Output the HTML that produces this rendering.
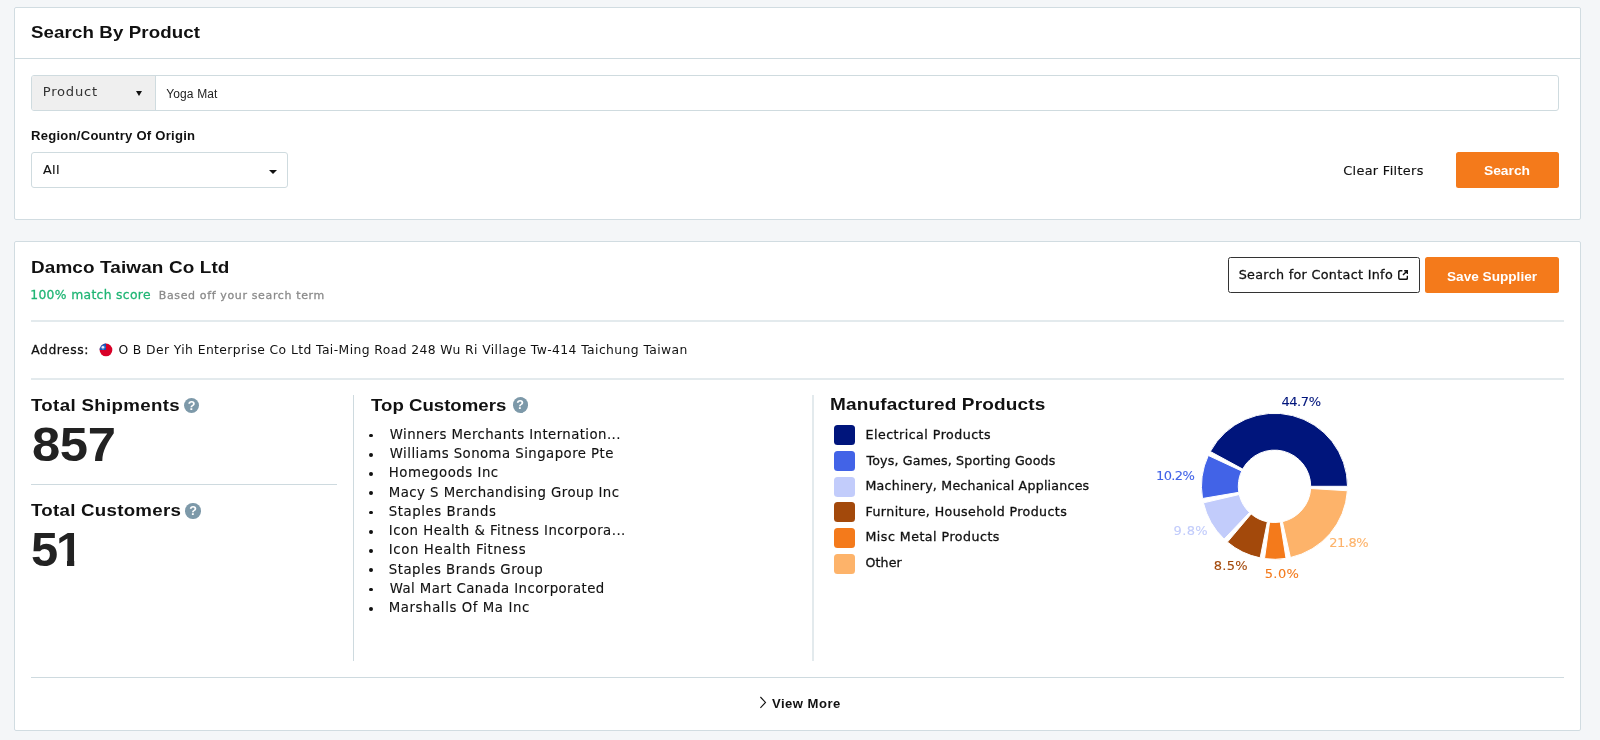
<!DOCTYPE html>
<html lang="en">
<head>
<meta charset="utf-8">
<title>Search By Product</title>
<style>
*{box-sizing:border-box;margin:0;padding:0}
html,body{width:1600px;height:740px;overflow:hidden}
body{background:#f4f6f8;color:#111;font-family:"DejaVu Sans","Liberation Sans",sans-serif;font-size:13px;position:relative}
.b{font-family:"Liberation Sans","DejaVu Sans",sans-serif;font-weight:bold}
.t{position:absolute;white-space:nowrap;line-height:1;display:block}
.card{will-change:transform;position:absolute;left:14px;width:1567px;background:#fff;border:1px solid #d1dce1;border-radius:2px}
#search{top:7px;height:213px}
#result{top:241px;height:490px}
.hr{position:absolute;height:1px;background:#cedadf}
.hr.soft{height:2px;background:#e3eaed}
.vr{position:absolute;width:1px;background:#cedadf}
.vr.soft{width:2px;background:#e3eaed}
/* card 1 */
#search .head-line{left:0;top:50px;width:1565px}
.group{position:absolute;left:16px;top:67px;width:1528px;height:35.5px;border:1px solid #cfdbdf;border-radius:3px;background:#fff;overflow:hidden}
.group .sel{position:absolute;left:0;top:0;width:124px;height:34px;background:#efefef;border-right:1px solid #cfdbdf}
.caret{position:absolute;width:0;height:0;border-left:4px solid transparent;border-right:4px solid transparent;border-top:5px solid #111}
.select{position:absolute;left:16px;top:144px;width:257px;height:36px;border:1px solid #cfdbdf;border-radius:3px;background:#fff}
.btn{position:absolute;height:36px;border-radius:2.5px;border:0;padding:0;font:inherit;color:inherit;text-align:left;overflow:visible}
.btn.primary{background:#f47a1b;color:#fff}
.btn.outline{background:#fff;border:1px solid #333}
.help{position:absolute;width:15.4px;height:15.4px;border-radius:50%;background:#7d99a9;color:#fff;font-family:"Liberation Sans",sans-serif;font-weight:bold;font-size:12.6px;line-height:16px;text-align:center}
ul.cust{list-style:none;position:absolute;left:355px;top:181px;width:440px}
ul.cust li{position:relative;height:19.25px}
ul.cust li::before{content:"";position:absolute;left:-0.6px;top:10.5px;width:3.9px;height:3.9px;border-radius:50%;background:#111}
ul.cust .t{font-size:13.3px;-webkit-text-stroke:.12px currentColor}
ul.legend{list-style:none;position:absolute;left:819px;top:183.2px;width:300px}
ul.legend li{position:relative;height:25.74px}
ul.legend li i{position:absolute;left:0;top:0;width:21px;height:20px;border-radius:3.5px}
ul.legend .t{font-size:12.6px;-webkit-text-stroke:.3px currentColor}
.pl{font-size:13px;-webkit-text-stroke:.1px currentColor}
.m{-webkit-text-stroke:.28px currentColor}
.m2{-webkit-text-stroke:.15px currentColor}
/*FIT-START*/
#t-title{left:16.30px;top:16.10px;letter-spacing:0.097px;transform:scaleX(1.1000);transform-origin:0 0}
#t-product{left:10.80px;top:9.40px;letter-spacing:0.767px}
#t-yoga{left:134.20px;top:12.20px;letter-spacing:0.143px}
#t-region{left:15.60px;top:123.30px;letter-spacing:0.225px;transform:scaleX(1.1000);transform-origin:0 0}
#t-all{left:10.90px;top:11.10px;letter-spacing:0.450px}
#t-clear{left:1328.20px;top:156.90px;letter-spacing:0.358px}
#t-search{left:27.90px;top:13.25px;letter-spacing:-0.036px;transform:scaleX(1.1000);transform-origin:0 0}
#t-name{left:16.00px;top:16.80px;letter-spacing:0.116px;transform:scaleX(1.1000);transform-origin:0 0}
#t-match{left:15.25px;top:46.75px;letter-spacing:0.333px}
#t-based{left:143.80px;top:47.75px;letter-spacing:0.632px}
#t-contact{left:9.70px;top:10.70px;letter-spacing:0.309px}
#t-save{left:21.51px;top:12.71px;letter-spacing:0.000px;transform:scaleX(1.0471);transform-origin:0 0}
#t-addr-l{left:16.25px;top:102.00px;letter-spacing:0.543px}
#t-addr{left:103.40px;top:102.00px;letter-spacing:0.407px}
#t-ship{left:16.40px;top:154.50px;letter-spacing:0.299px;transform:scaleX(1.1000);transform-origin:0 0}
#t-857{left:17.10px;top:177.50px;letter-spacing:-0.385px;transform:scaleX(1.0397);transform-origin:0 0}
#t-cust{left:16.40px;top:260.00px;letter-spacing:0.240px;transform:scaleX(1.1000);transform-origin:0 0}
#t-top{left:356.00px;top:154.50px;letter-spacing:0.015px;transform:scaleX(1.0943);transform-origin:0 0}
#t-manu{left:815.00px;top:154.10px;letter-spacing:0.136px;transform:scaleX(1.1000);transform-origin:0 0}
#t-view{left:757.00px;top:456.50px;letter-spacing:0.432px;transform:scaleX(1.1000);transform-origin:0 0}
#t-c0{left:19.80px;top:4.80px;letter-spacing:0.426px}
#t-c1{left:19.80px;top:4.80px;letter-spacing:0.446px}
#t-c2{left:18.80px;top:4.80px;letter-spacing:0.508px}
#t-c3{left:18.80px;top:4.80px;letter-spacing:0.455px}
#t-c4{left:18.80px;top:4.80px;letter-spacing:0.554px}
#t-c5{left:18.80px;top:4.80px;letter-spacing:0.473px}
#t-c6{left:18.80px;top:4.80px;letter-spacing:0.600px}
#t-c7{left:18.80px;top:4.80px;letter-spacing:0.500px}
#t-c8{left:19.80px;top:4.80px;letter-spacing:0.422px}
#t-c9{left:18.80px;top:4.80px;letter-spacing:0.578px}
#t-l0{left:31.50px;top:3.91px;letter-spacing:0.489px}
#t-l1{left:32.50px;top:3.68px;letter-spacing:0.173px}
#t-l2{left:31.50px;top:3.44px;letter-spacing:0.223px}
#t-l3{left:31.50px;top:3.21px;letter-spacing:0.418px}
#t-l4{left:31.50px;top:2.98px;letter-spacing:0.494px}
#t-l5{left:31.50px;top:2.74px;letter-spacing:0.100px}
#t-p0{left:1266.40px;top:152.70px;letter-spacing:-0.425px}
#t-p1{left:1141.00px;top:227.10px;letter-spacing:-0.625px}
#t-p2{left:1158.60px;top:281.90px;letter-spacing:0.367px}
#t-p3{left:1198.70px;top:316.50px;letter-spacing:0.300px}
#t-p4{left:1249.70px;top:325.00px;letter-spacing:0.400px}
#t-p5{left:1314.20px;top:293.50px;letter-spacing:-0.475px}
/*FIT-END*/
</style>
</head>
<body>

<section class="card" id="search">
  <h2 class="t b" id="t-title" style="font-size:17px">Search By Product</h2>
  <div class="hr head-line"></div>
  <div class="group">
    <div class="sel">
      <span class="t" id="t-product" style="font-size:13.1px;color:#333">Product</span>
      <i class="caret" style="left:103.6px;top:15.2px;border-left-width:3.8px;border-right-width:3.8px;border-top-width:5.5px"></i>
    </div>
    <span class="t" id="t-yoga" style="font-family:'Liberation Sans',sans-serif;font-size:12px;color:#222">Yoga Mat</span>
  </div>
  <label class="t b" id="t-region" style="font-size:11.9px">Region/Country Of Origin</label>
  <div class="select">
    <span class="t m2" id="t-all" style="font-size:12.8px">All</span>
    <i class="caret" style="left:237px;top:17px;border-top-width:4px"></i>
  </div>
  <a class="t m2" id="t-clear" style="font-size:12.8px">Clear Filters</a>
  <button class="btn primary" style="left:1441px;top:144px;width:103px"><span class="t b" id="t-search" style="font-size:12.6px;color:#fff">Search</span></button>
</section>

<section class="card" id="result">
  <h3 class="t b" id="t-name" style="font-size:17.2px">Damco Taiwan Co Ltd</h3>
  <span class="t m" id="t-match" style="font-size:12.35px;color:#1fb574">100% match score</span>
  <span class="t m" id="t-based" style="font-size:11px;color:#8a8a8a">Based off your search term</span>
  <button class="btn outline" style="left:1213px;top:15.3px;width:191.8px;height:35.8px"><span class="t m" id="t-contact" style="font-size:12.76px">Search for Contact Info</span><svg class="ext" style="position:absolute;left:168.9px;top:11.9px" width="10.2" height="10" viewBox="0 0 10 10" fill="none" stroke="#111" stroke-width="1.45"><path d="M4.3 0.7H1.9A1.2 1.2 0 0 0 0.7 1.9V8.1A1.2 1.2 0 0 0 1.9 9.3H8.1A1.2 1.2 0 0 0 9.3 8.1V5.7"/><path d="M6.1 0.7H9.3V3.9M9.3 0.7L4.9 5.1"/></svg></button>
  <button class="btn primary" style="left:1410.1px;top:15.2px;width:133.6px;height:35.8px"><span class="t b" id="t-save" style="font-size:13px;color:#fff">Save Supplier</span></button>
  <div class="hr soft" style="left:16px;top:78px;width:1533px"></div>

  <span class="t m" id="t-addr-l" style="font-size:12.35px">Address:</span>
  <svg class="flag" style="position:absolute;left:83.8px;top:101px" width="14" height="14" viewBox="0 0 14 14"><circle cx="7" cy="6.9" r="6.35" fill="#d80027"/><path d="M7 6.9H0.65A6.35 6.35 0 0 1 7 0.55Z" fill="#0f52ba"/><circle cx="3.9" cy="4.3" r="2.1" fill="none" stroke="#9db9e6" stroke-width=".7" stroke-dasharray=".6 .5"/><circle cx="3.9" cy="4.3" r="1.35" fill="#eef"/></svg>
  <span class="t" id="t-addr"  style="font-size:12.35px">O B Der Yih Enterprise Co Ltd Tai-Ming Road 248 Wu Ri Village Tw-414 Taichung Taiwan</span>
  <div class="hr soft" style="left:16px;top:136px;width:1533px"></div>

  <h4 class="t b" id="t-ship" style="font-size:17px">Total Shipments</h4>
  <span class="help" style="left:169px;top:155.7px">?</span>
  <div class="t b" id="t-857" style="font-size:48.8px;color:#222">857</div>
  <div class="hr" style="left:16px;top:242px;width:306px"></div>
  <h4 class="t b" id="t-cust" style="font-size:17px">Total Customers</h4>
  <span class="help" style="left:170.3px;top:261.3px">?</span>
  <div class="t b" id="n-51" style="left:15.9px;top:282.9px;font-size:48.8px;color:#222;width:60px;height:49px"><span style="position:absolute;left:0;top:0">5</span><span style="position:absolute;left:25.2px;top:0;clip-path:polygon(0 0,18.15px 0,18.15px 50px,10.95px 50px,10.95px 35.5px,0 35.5px)">1</span></div>
  <div class="vr" style="left:338px;top:153px;height:266px"></div>

  <h4 class="t b" id="t-top" style="font-size:17px">Top Customers</h4>
  <span class="help" style="left:497.5px;top:155.4px">?</span>
  <ul class="cust">
    <li><span class="t" id="t-c0">Winners Merchants Internation...</span></li>
    <li><span class="t" id="t-c1">Williams Sonoma Singapore Pte</span></li>
    <li><span class="t" id="t-c2">Homegoods Inc</span></li>
    <li><span class="t" id="t-c3">Macy S Merchandising Group Inc</span></li>
    <li><span class="t" id="t-c4">Staples Brands</span></li>
    <li><span class="t" id="t-c5">Icon Health &amp; Fitness Incorpora...</span></li>
    <li><span class="t" id="t-c6">Icon Health Fitness</span></li>
    <li><span class="t" id="t-c7">Staples Brands Group</span></li>
    <li><span class="t" id="t-c8">Wal Mart Canada Incorporated</span></li>
    <li><span class="t" id="t-c9">Marshalls Of Ma Inc</span></li>
  </ul>
  <div class="vr soft" style="left:797px;top:153px;height:266px"></div>

  <h4 class="t b" id="t-manu" style="font-size:17.3px">Manufactured Products</h4>
  <ul class="legend">
    <li><i style="background:#00157c"></i><span class="t" id="t-l0">Electrical Products</span></li>
    <li><i style="background:#4263e7"></i><span class="t" id="t-l1">Toys, Games, Sporting Goods</span></li>
    <li><i style="background:#c2ccfb"></i><span class="t" id="t-l2">Machinery, Mechanical Appliances</span></li>
    <li><i style="background:#a3490b"></i><span class="t" id="t-l3">Furniture, Household Products</span></li>
    <li><i style="background:#f47a1b"></i><span class="t" id="t-l4">Misc Metal Products</span></li>
    <li><i style="background:#fdb36a"></i><span class="t" id="t-l5">Other</span></li>
  </ul>
  <svg class="donut" style="position:absolute;left:1175px;top:163px" width="170" height="165" viewBox="0 0 170 165" stroke="#fff" stroke-width="1"><path d="M157.50 81.30A73.0 73.0 0 0 0 20.33 46.50L52.68 64.05A36.2 36.2 0 0 1 120.70 81.30Z" fill="#00157c"/><path d="M18.32 50.49A73.0 73.0 0 0 0 12.52 93.49L48.81 87.34A36.2 36.2 0 0 1 51.68 66.02Z" fill="#4263e7"/><path d="M13.40 97.86A73.0 73.0 0 0 0 34.10 134.11L59.51 107.49A36.2 36.2 0 0 1 49.24 89.51Z" fill="#c2ccfb"/><path d="M37.41 137.08A73.0 73.0 0 0 0 70.13 152.87L77.37 116.79A36.2 36.2 0 0 1 61.15 108.96Z" fill="#a3490b"/><path d="M74.53 153.62A73.0 73.0 0 0 0 96.04 153.38L90.22 117.04A36.2 36.2 0 0 1 79.55 117.16Z" fill="#f47a1b"/><path d="M100.42 152.54A73.0 73.0 0 0 0 157.36 85.76L120.63 83.51A36.2 36.2 0 0 1 92.40 116.63Z" fill="#fdb36a"/></svg>
  <span class="t pl" id="t-p0" style="color:#00157c">44.7%</span>
  <span class="t pl" id="t-p1" style="color:#4263e7">10.2%</span>
  <span class="t pl" id="t-p2" style="color:#c2ccfb">9.8%</span>
  <span class="t pl" id="t-p3" style="color:#a3490b">8.5%</span>
  <span class="t pl" id="t-p4" style="color:#f47a1b">5.0%</span>
  <span class="t pl" id="t-p5" style="color:#fdb36a">21.8%</span>
  <div class="hr" style="left:16px;top:435px;width:1533px"></div>
  <svg style="position:absolute;left:744px;top:454px" width="9" height="13" viewBox="0 0 9 13" fill="none" stroke="#111" stroke-width="1.1"><path d="M1.4 1L6.5 6.4L1.4 11.8"/></svg>
  <a class="t b" id="t-view" style="font-size:11.9px">View More</a>
</section>

</body>
</html>
